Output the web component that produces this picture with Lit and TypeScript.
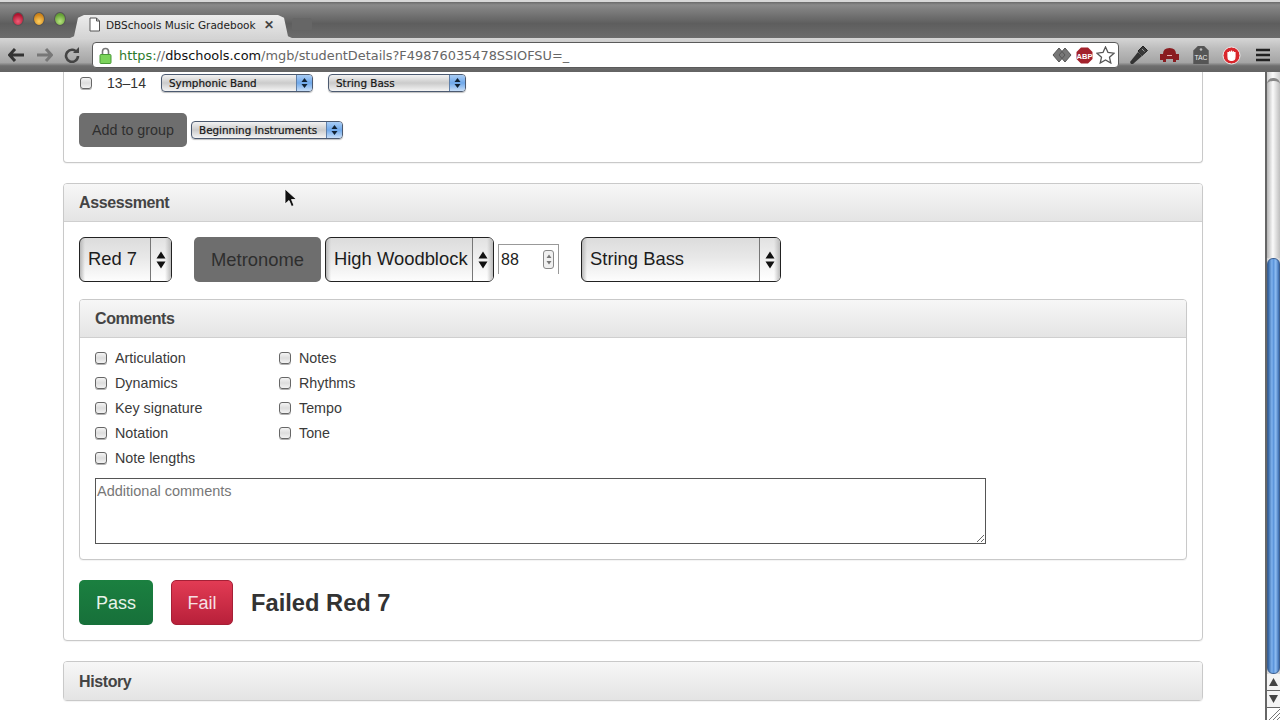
import { LitElement, html, css, svg } from "lit";
import { customElement } from "lit/decorators.js";

const updown = svg`<svg class="ud" width="10" height="20" viewBox="0 0 10 20"><path d="M5 1.5 9.5 8.5H.5zM5 18.5 .5 11.5H9.5z" fill="#111"/></svg>`;
const smallUd = svg`<svg width="7" height="12" viewBox="0 0 7 12"><path d="M3.5 1 6.5 5H.5zM3.5 11 .5 7H6.5z" fill="#123"/></svg>`;
const spinUd = svg`<svg width="6" height="13" viewBox="0 0 6 13"><path d="M3 1.500 5.500 5H.5zM3 11.500 .5 8H5.500z" fill="#777"/></svg>`;

@customElement("app-root")
export class AppRoot extends LitElement {
  static styles = css`
    :host { display: block; width: 1280px; height: 720px; overflow: hidden; position: relative; font-family: "Liberation Sans", Arial, sans-serif; color: #333; background: #fff; }
    * { box-sizing: border-box; }
    .window { display: flex; flex-direction: column; height: 720px; }

    .tabstrip { height: 38px; flex: none; display: flex; align-items: flex-end; background: linear-gradient(#6a6a6a, #8a8a8a 8%, #5e5e5e 60%, #6c6c6c); border-top: 2px solid #d8d8d8; }
    .lights { display: flex; gap: 9px; padding: 0 0 12px 12px; width: 70px; flex: none; }
    .light { width: 12px; height: 14px; border-radius: 50%; flex: none; border: 1px solid #555; }
    .red { background: radial-gradient(circle at 50% 70%, #f0607a, #b0142f 70%); }
    .amber { background: radial-gradient(circle at 50% 70%, #ffd060, #cc8218 70%); }
    .green { background: radial-gradient(circle at 50% 70%, #b8e480, #64a034 70%); }
    .tab { width: 222px; height: 23px; flex: none; background: linear-gradient(#ececec, #d4d4d4); clip-path: polygon(0 100%, 4px 92%, 8px 12%, 14px 0, calc(100% - 14px) 0, calc(100% - 8px) 12%, calc(100% - 4px) 92%, 100% 100%); display: flex; align-items: center; padding: 0 18px 4px 18px; gap: 5px; color: #222; white-space: nowrap; overflow: hidden; }
    .tab-title { flex: 1; overflow: hidden; font-size: 10.5px; font-family: "DejaVu Sans", sans-serif; }
    .tab-x { font-size: 12px; color: #444; font-weight: bold; }
    .newtab { width: 20px; height: 12px; margin: 0 0 8px 0; background: #666; border-radius: 3px 3px 1px 1px; flex: none; }

    .toolbar { height: 34px; flex: none; display: flex; align-items: center; background: linear-gradient(#d6d6d6, #bdbdbd 30%, #a5a5a5 72%, #6e6e6e 82%, #636363); padding: 0 0 0 8px; }
    .navs { width: 84px; flex: none; display: flex; gap: 11px; align-items: center; }
    .omni { width: 1027px; height: 26px; flex: none; background: #fff; border: 1px solid #5a5a5a; border-radius: 4px; display: flex; align-items: center; padding: 0 3px 0 6px; }
    .lock { flex: none; margin-right: 7px; }
    .url { flex: 1; font-family: "DejaVu Sans", sans-serif; font-size: 12.88px; color: #666; white-space: nowrap; }
    .url .https { color: #2c7a2c; }
    .url b { color: #111; font-weight: normal; }
    .omni-icons { display: flex; align-items: center; gap: 3px; flex: none; }
    .ext { display: flex; align-items: center; margin-left: 4px; flex: none; }
    .slot { width: 31px; height: 24px; flex: none; display: flex; align-items: center; justify-content: center; }

    .page { flex: 1; display: flex; min-height: 0; }
    .main { flex: 1; padding: 0 62px 0 63px; overflow: hidden; }
    .sb { width: 15px; flex: none; display: flex; flex-direction: column; border-left: 2px solid #666; background: linear-gradient(90deg, #cfcfcf, #fafafa 45%, #cfcfcf); }
    .sb-track { height: 180px; flex: none; border-radius: 6px 6px 0 0; border-top: 3px solid #888; margin-top: 6px; background: linear-gradient(90deg, #b4b4b4, #fafafa 45%, #bebebe); }
    .sb-thumb { height: 416px; flex: none; border-radius: 6px; background: linear-gradient(90deg, #2f5f9c, #7fb2ee 35%, #5d96dc 50%, #8dbcf2 70%, #3a6cb0); border: 1px solid #3c5f90; }
    .sb-btn { height: 17px; flex: none; background: #f4f4f4; border-bottom: 1px solid #666; display: flex; align-items: center; justify-content: center; }
    .sb-rest { flex: 1; background: #fff; display: flex; align-items: flex-end; justify-content: flex-end; }

    .panel { border: 1px solid #c9c9c9; border-radius: 4px; margin-bottom: 20px; background: #fff; box-shadow: 0 1px 1px rgba(0,0,0,.05); }
    .panel.cut { border-top: 0; border-radius: 0 0 4px 4px; padding: 2px 15px 15px; height: 91px; }
    .head { height: 38px; display: flex; align-items: center; padding: 1px 15px 0; font-size: 16px; letter-spacing: -.4px; font-weight: bold; color: #444; background: linear-gradient(#f7f7f7, #e4e4e4); border-bottom: 1px solid #cfcfcf; border-radius: 3px 3px 0 0; }
    .panel.last { margin-bottom: 0; }
    .panel.last .head { border-bottom: 0; }
    .body { padding: 15px; }

    .group-row { display: flex; align-items: center; height: 18px; font-size: 14px; padding-left: 1px; }
    .year { margin: 0 15px; width: 39px; }
    .ssel { height: 18px; border: 1px solid #4c5a70; border-radius: 4px; display: flex; background: linear-gradient(#f2f2f2, #cbcbcb 50%, #f4f4f4); font-family: "DejaVu Sans", sans-serif; font-size: 10.4px; -webkit-text-stroke: .2px #222; color: #111; overflow: hidden; flex: none; box-shadow: 0 1px 1px rgba(0,0,0,.25); }
    .ssel span { flex: 1; padding-left: 7px; line-height: 16px; white-space: nowrap; }
    .ssel i { width: 16px; flex: none; display: flex; align-items: center; justify-content: center; background: linear-gradient(#a9cdf5, #6fa8ea 50%, #c7def8); border-left: 1px solid #5f7fa8; }
    .w152 { width: 152px; } .w138 { width: 138px; margin-left: 15px; }
    .add-row { display: flex; align-items: center; gap: 4px; margin-top: 21px; }
    .btn { border: 0; font-family: inherit; flex: none; padding: 0; display: flex; align-items: center; justify-content: center; }
    .gray { background: #6e6e6e; color: #2e2e2e; border-radius: 5px; }
    .add { width: 108px; height: 34px; font-size: 14.3px; }
    .metro { width: 127px; height: 45px; font-size: 18.4px; margin: 0 4px 0 22px; padding-top: 1px; }

    .controls { display: flex; align-items: center; height: 45px; margin-bottom: 17px; }
    .bsel { height: 45px; flex: none; border: 1px solid #222; border-radius: 6px; display: flex; font-size: 18.4px; color: #1c1c1c; background: linear-gradient(90deg, #b8b8b8, transparent 5px), linear-gradient(#dcdcdc, #e8e8e8 45%, #fdfdfd); overflow: hidden; }
    .bsel span { flex: 1; padding-left: 8px; line-height: 42px; white-space: nowrap; }
    .bsel i { width: 21px; flex: none; border-left: 1px solid #777; display: flex; align-items: center; justify-content: center; background: linear-gradient(90deg, transparent 70%, #bbb), linear-gradient(#e2e2e2, #fff); }
    .b93 { width: 93px; } .b169 { width: 169px; } .b200 { width: 200px; margin-left: 22px; }
    .num { width: 61px; height: 30px; flex: none; align-self: flex-start; margin: 7px 0 0 4px; border: 1px solid #999; border-bottom: 0; display: flex; align-items: center; justify-content: space-between; padding: 0 4px 0 2px; font-size: 16px; color: #222; }
    .spin { width: 11px; height: 19px; border: 1px solid #888; border-radius: 3px; display: flex; align-items: center; justify-content: center; background: #f0f0f0; }

    .checks { display: grid; grid-template-columns: 184px 184px; grid-auto-flow: column; grid-template-rows: repeat(5, 25px); }
    .chk { display: flex; align-items: center; gap: 8px; font-size: 14.3px; color: #3a3a3a; white-space: nowrap; }
    .box { width: 12px; height: 12px; border: 1px solid #666; border-radius: 3px; background: linear-gradient(#f4f4f4, #ddd 50%, #f2f2f2); flex: none; box-shadow: 0 1px 0 rgba(0,0,0,.3); }
    textarea { display: block; width: 891px; height: 66px; margin-top: 8px; border: 1px solid #555; padding: 4px 1px; font: 14.5px "Liberation Sans", sans-serif; color: #333; background: #fff; border-radius: 0; outline: 0; }
    textarea::placeholder { color: #777; opacity: 1; }
    .panel.inner { margin-bottom: 20px; }
    .panel.inner .body { padding: 7px 15px 15px; }

    .verdict { display: flex; align-items: center; height: 45px; }
    .pass { width: 74px; height: 45px; border-radius: 5px; background: linear-gradient(#1b8040, #17703a); color: #e8f3ea; font-size: 18px; padding-top: 1px; }
    .fail { width: 62px; height: 45px; border-radius: 5px; margin: 0 18px; background: linear-gradient(#e23b54, #b8203a); border: 1px solid #a52036; color: #f6e0e4; font-size: 18px; padding-top: 1px; }
    .result { font-size: 23.7px; font-weight: bold; color: #333; padding-top: 1px; }
    .cursor { position: absolute; left: 284px; top: 188px; }
  `;

  render() {
    const col = ["Articulation", "Dynamics", "Key signature", "Notation", "Note lengths", "Notes", "Rhythms", "Tempo", "Tone"];
    return html`<div class="window">
      <div class="tabstrip">
        <div class="lights"><div class="light red"></div><div class="light amber"></div><div class="light green"></div></div>
        <div class="tab">
          <svg width="13" height="15" viewBox="0 0 13 15"><path d="M2 1H8.5L11.5 4V14H2z M8.5 1V4H11.5" fill="#fff" stroke="#555"/></svg>
          <span class="tab-title">DBSchools Music Gradebook</span><span class="tab-x">✕</span>
        </div>
        <div class="newtab"></div>
      </div>
      <div class="toolbar">
        <div class="navs">
          <svg width="17" height="14" viewBox="0 0 17 14"><path d="M7 1 1.5 7 7 13M2 7H16" fill="none" stroke="#333" stroke-width="3"/></svg>
          <svg width="17" height="14" viewBox="0 0 17 14"><path d="M10 1 15.5 7 10 13M15 7H1" fill="none" stroke="#777" stroke-width="3"/></svg>
          <svg width="16" height="16" viewBox="0 0 16 16"><path d="M13 5.5A6 6 0 1 0 14 9" fill="none" stroke="#444" stroke-width="2.6"/><path d="M9 6H15V0z" fill="#444"/></svg>
        </div>
        <div class="omni">
          <svg class="lock" width="13" height="17" viewBox="0 0 13 17"><path d="M3.5 8V4.5a3 3 0 0 1 6 0V8" fill="none" stroke="#777" stroke-width="1.6"/><rect x="1" y="7.5" width="11" height="9" rx="1" fill="#7bd35a" stroke="#4b9a38"/></svg>
          <div class="url"><span class="https">https:</span>//<b>dbschools.com</b>/mgb/studentDetails?F49876035478SSIOFSU=_</div>
          <div class="omni-icons">
            <svg width="20" height="18" viewBox="0 0 20 18" style="margin-right:1px"><path d="M7 2 13 9 7 16 1 9zM13 2 19 9 13 16 7 9z" fill="#777" stroke="#555"/></svg>
            <svg width="17" height="17" viewBox="0 0 17 17"><path d="M5 .5H12L16.500 5V12L12 16.500H5L.5 12V5z" fill="#a3222c"/><text x="8.500" y="11.500" text-anchor="middle" font-size="7.500" font-weight="bold" fill="#fff" font-family="Liberation Sans">ABP</text></svg>
            <svg width="19" height="18" viewBox="0 0 19 18"><path d="M9.500 1 12 6.500 18 7.200 13.500 11.300 14.800 17 9.500 14 4.200 17 5.500 11.300 1 7.200 7 6.500z" fill="#fff" stroke="#555" stroke-width="1.300"/></svg>
          </div>
        </div>
        <div class="ext">
          <div class="slot"><svg width="19" height="20" viewBox="0 0 19 20"><path d="M2 19 1 17 9 7 13 11 4 19z" fill="#333"/><path d="M9 6 14 1 18.500 5.500 13 10.500z" fill="#3a3a3a" stroke="#222"/><path d="M13 4 15.500 6.500" stroke="#999"/></svg></div>
          <div class="slot"><svg width="21" height="16" viewBox="0 0 21 16"><path d="M4 15V7Q4 1 10.500 1T17 7V15H14V12H7V15zM1 7H4V13H1zM17 7H20V13H17z" fill="#8a1c20"/><path d="M8 8.500H13" stroke="#e9b0b0"/></svg></div>
          <div class="slot"><svg width="18" height="20" viewBox="0 0 19 22"><path d="M1 6 6 1H13L18 6V21H1z" fill="#555"/><circle cx="9.500" cy="5" r="1.400" fill="#bbb"/><text x="9.500" y="17" text-anchor="middle" font-size="7.500" fill="#eee" font-family="Liberation Sans">TAC</text></svg></div>
          <div class="slot"><svg width="19" height="19" viewBox="0 0 19 19"><circle cx="9.500" cy="9.500" r="8.500" fill="#d9262c" stroke="#eee"/><path d="M6 6V10.500C6 13 7.500 14.500 9.500 14.500S13 13 13 10.500V6M7.800 5V10M9.500 4.500V10M11.200 5V10" fill="#fff" stroke="#fff" stroke-width="1.200"/></svg></div>
          <div class="slot"><svg width="14" height="14" viewBox="0 0 14 14"><path d="M0 2H14M0 7H14M0 12H14" stroke="#222" stroke-width="2.500"/></svg></div>
        </div>
      </div>
      <div class="page">
        <div class="main">
          <div class="panel cut">
            <div class="group-row">
              <span class="box"></span><span class="year">13–14</span>
              <div class="ssel w152"><span>Symphonic Band</span><i>${smallUd}</i></div>
              <div class="ssel w138"><span>String Bass</span><i>${smallUd}</i></div>
            </div>
            <div class="add-row">
              <button class="btn gray add">Add to group</button>
              <div class="ssel w152"><span>Beginning Instruments</span><i>${smallUd}</i></div>
            </div>
          </div>
          <div class="panel">
            <div class="head">Assessment</div>
            <div class="body">
              <div class="controls">
                <div class="bsel b93"><span>Red 7</span><i>${updown}</i></div>
                <button class="btn gray metro">Metronome</button>
                <div class="bsel b169"><span>High Woodblock</span><i>${updown}</i></div>
                <div class="num"><span>88</span><span class="spin">${spinUd}</span></div>
                <div class="bsel b200"><span>String Bass</span><i>${updown}</i></div>
              </div>
              <div class="panel inner">
                <div class="head">Comments</div>
                <div class="body">
                  <div class="checks">${col.map((c) => html`<label class="chk"><span class="box"></span>${c}</label>`)}</div>
                  <textarea placeholder="Additional comments"></textarea>
                </div>
              </div>
              <div class="verdict">
                <button class="btn pass">Pass</button>
                <button class="btn fail">Fail</button>
                <span class="result">Failed Red 7</span>
              </div>
            </div>
          </div>
          <div class="panel last"><div class="head">History</div></div>
        </div>
        <div class="sb">
          <div class="sb-track"></div>
          <div class="sb-thumb"></div>
          <div class="sb-btn"><svg width="9" height="8" viewBox="0 0 9 8"><path d="M4.500 0 9 8H0z" fill="#444"/></svg></div>
          <div class="sb-btn"><svg width="9" height="8" viewBox="0 0 9 8"><path d="M4.500 8 0 0H9z" fill="#444"/></svg></div>
          <div class="sb-rest"><svg width="13" height="13" viewBox="0 0 13 13"><path d="M13 1 1 13M13 5 5 13M13 9 9 13" stroke="#777"/></svg></div>
        </div>
      </div>
    </div>
    <svg class="cursor" width="14" height="20" viewBox="0 0 14 20"><path d="M1 1V16L5 12.500 7.500 18.500 10 17.500 7.500 11.500H12.500z" fill="#111" stroke="#fff" stroke-width=".8"/></svg>`;
  }
}
